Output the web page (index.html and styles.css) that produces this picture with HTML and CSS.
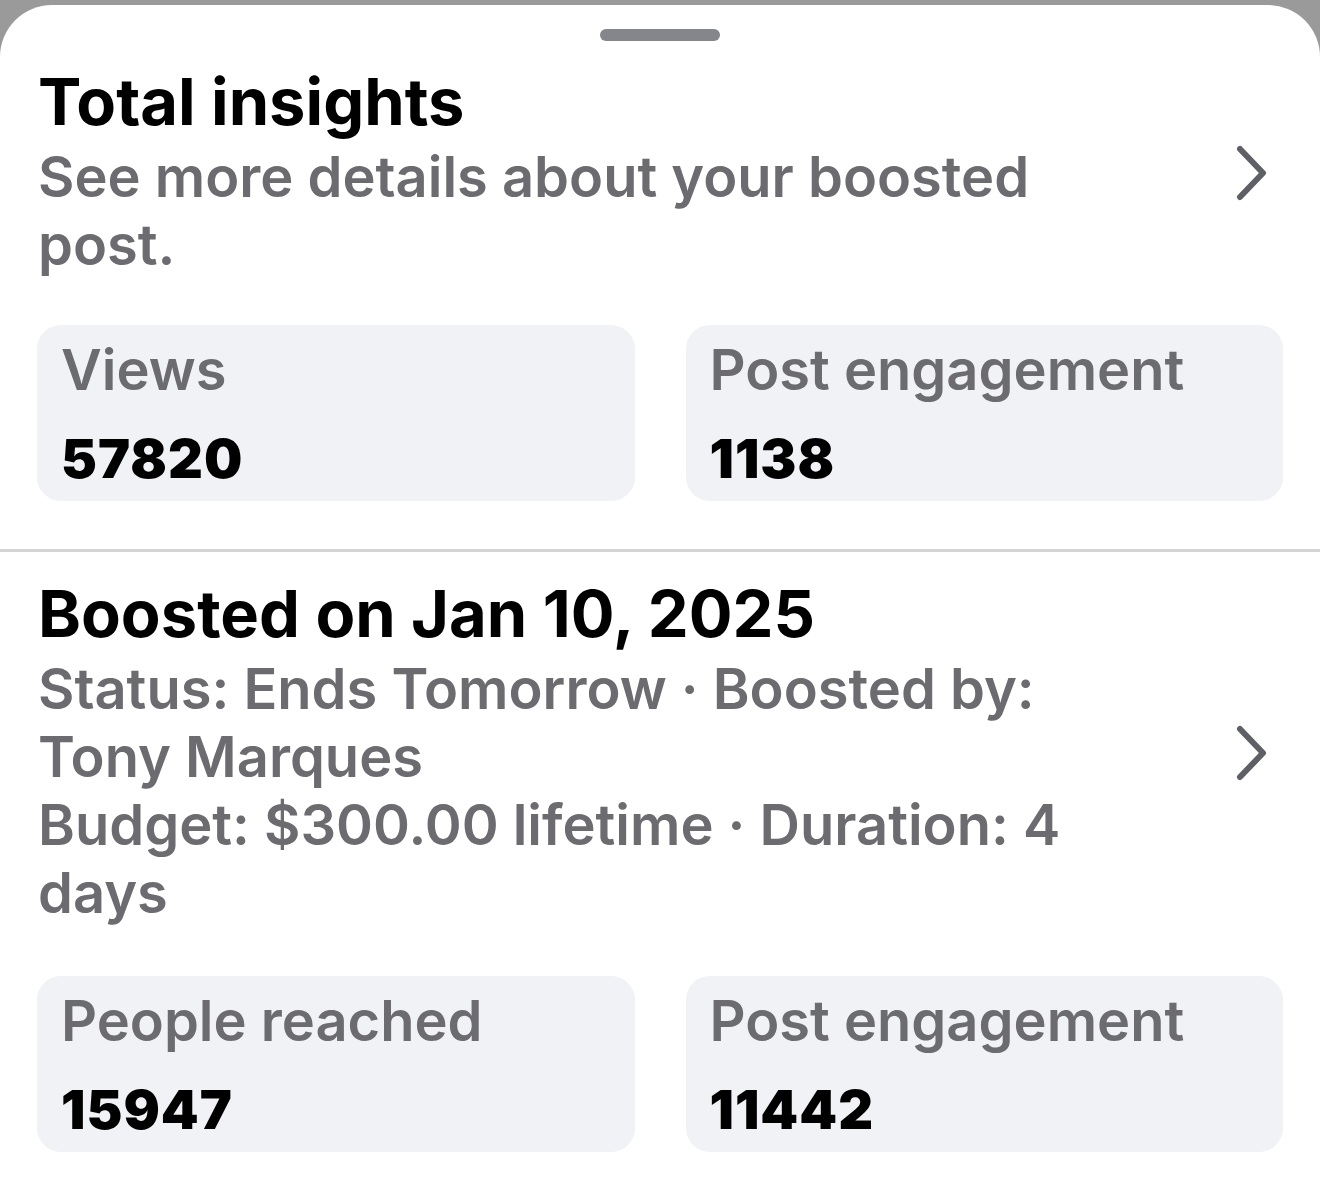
FILE: index.html
```html
<!DOCTYPE html>
<html>
<head>
    <title>Boosted post insights</title>
	<link rel="stylesheet" href="styles.css">
</head>
<body>
	<div class="sheet">
		<div class="grabber"></div>

		<section class="section section-first">
			<div class="row">
				<div class="text">
					<h1 class="title">Total insights</h1>
					<p class="sub">See more details about your boosted post.</p>
				</div>
				<svg class="chevron" width="32" height="58" viewBox="0 0 32 58">
					<polyline points="5,5 28,29 5,53" fill="none" stroke="#5f6065" stroke-width="6" stroke-linecap="round" stroke-linejoin="round"/>
				</svg>
			</div>

			<div class="cards">
				<div class="card">
					<div class="label">Views</div>
					<div class="value">57820</div>
				</div>
				<div class="card">
					<div class="label">Post engagement</div>
					<div class="value">1138</div>
				</div>
			</div>
		</section>

		<hr class="divider">

		<section class="section">
			<div class="row">
				<div class="text">
					<h2 class="title">Boosted on Jan 10, 2025</h2>
					<p class="sub">Status: Ends Tomorrow · Boosted by: Tony Marques<br>Budget: $300.00 lifetime · Duration: 4 days</p>
				</div>
				<svg class="chevron" width="32" height="58" viewBox="0 0 32 58">
					<polyline points="5,5 28,29 5,53" fill="none" stroke="#5f6065" stroke-width="6" stroke-linecap="round" stroke-linejoin="round"/>
				</svg>
			</div>

			<div class="cards cards-last">
				<div class="card">
					<div class="label">People reached</div>
					<div class="value">15947</div>
				</div>
				<div class="card">
					<div class="label">Post engagement</div>
					<div class="value">11442</div>
				</div>
			</div>
		</section>
	</div>
</body>
</html>
```

FILE: styles.css
```css
html, body {
	margin: 0;
	padding: 0;
}

body {
	background-color: #9a9a9a;
	font-family: Inter, "Noto Sans", sans-serif;
	padding-top: 5px;
}

.sheet {
	background-color: #ffffff;
	border-radius: 52px 52px 0 0;
	min-height: 1192px;
	padding: 24px 37px 0 37px;
	box-sizing: border-box;
}

.grabber {
	width: 120px;
	height: 12px;
	border-radius: 6px;
	background-color: #85868b;
	margin: 0 auto;
}

.section-first {
	margin-top: 25px;
}

.row {
	display: flex;
	align-items: center;
	justify-content: space-between;
}

.text {
	width: 1080px;
	padding-left: 1px;
}

.title {
	margin: 0;
	font-size: 65px;
	line-height: 72px;
	font-weight: 700;
	color: #000000;
}

.sub {
	margin: 5px 0 0 0;
	font-size: 56px;
	line-height: 68px;
	font-weight: 600;
	color: #6b6b70;
}

.chevron {
	margin-right: 16px;
	flex-shrink: 0;
}

.cards {
	display: grid;
	grid-template-columns: 1fr 1fr;
	gap: 51px;
	margin-top: 46px;
}

.cards-last {
	margin-top: 49px;
}

.card {
	background-color: #f1f2f6;
	border-radius: 24px;
	height: 176px;
	padding: 13px 25px 0 24px;
	box-sizing: border-box;
}

.label {
	font-size: 56px;
	line-height: 64px;
	font-weight: 600;
	color: #6b6b70;
}

.value {
	margin-top: 26px;
	font-size: 54px;
	line-height: 62px;
	font-weight: 900;
	color: #000000;
	letter-spacing: 1px;
}

.divider {
	border: none;
	height: 3px;
	background-color: #d4d4d7;
	margin: 48px -37px 26px -37px;
}
```
